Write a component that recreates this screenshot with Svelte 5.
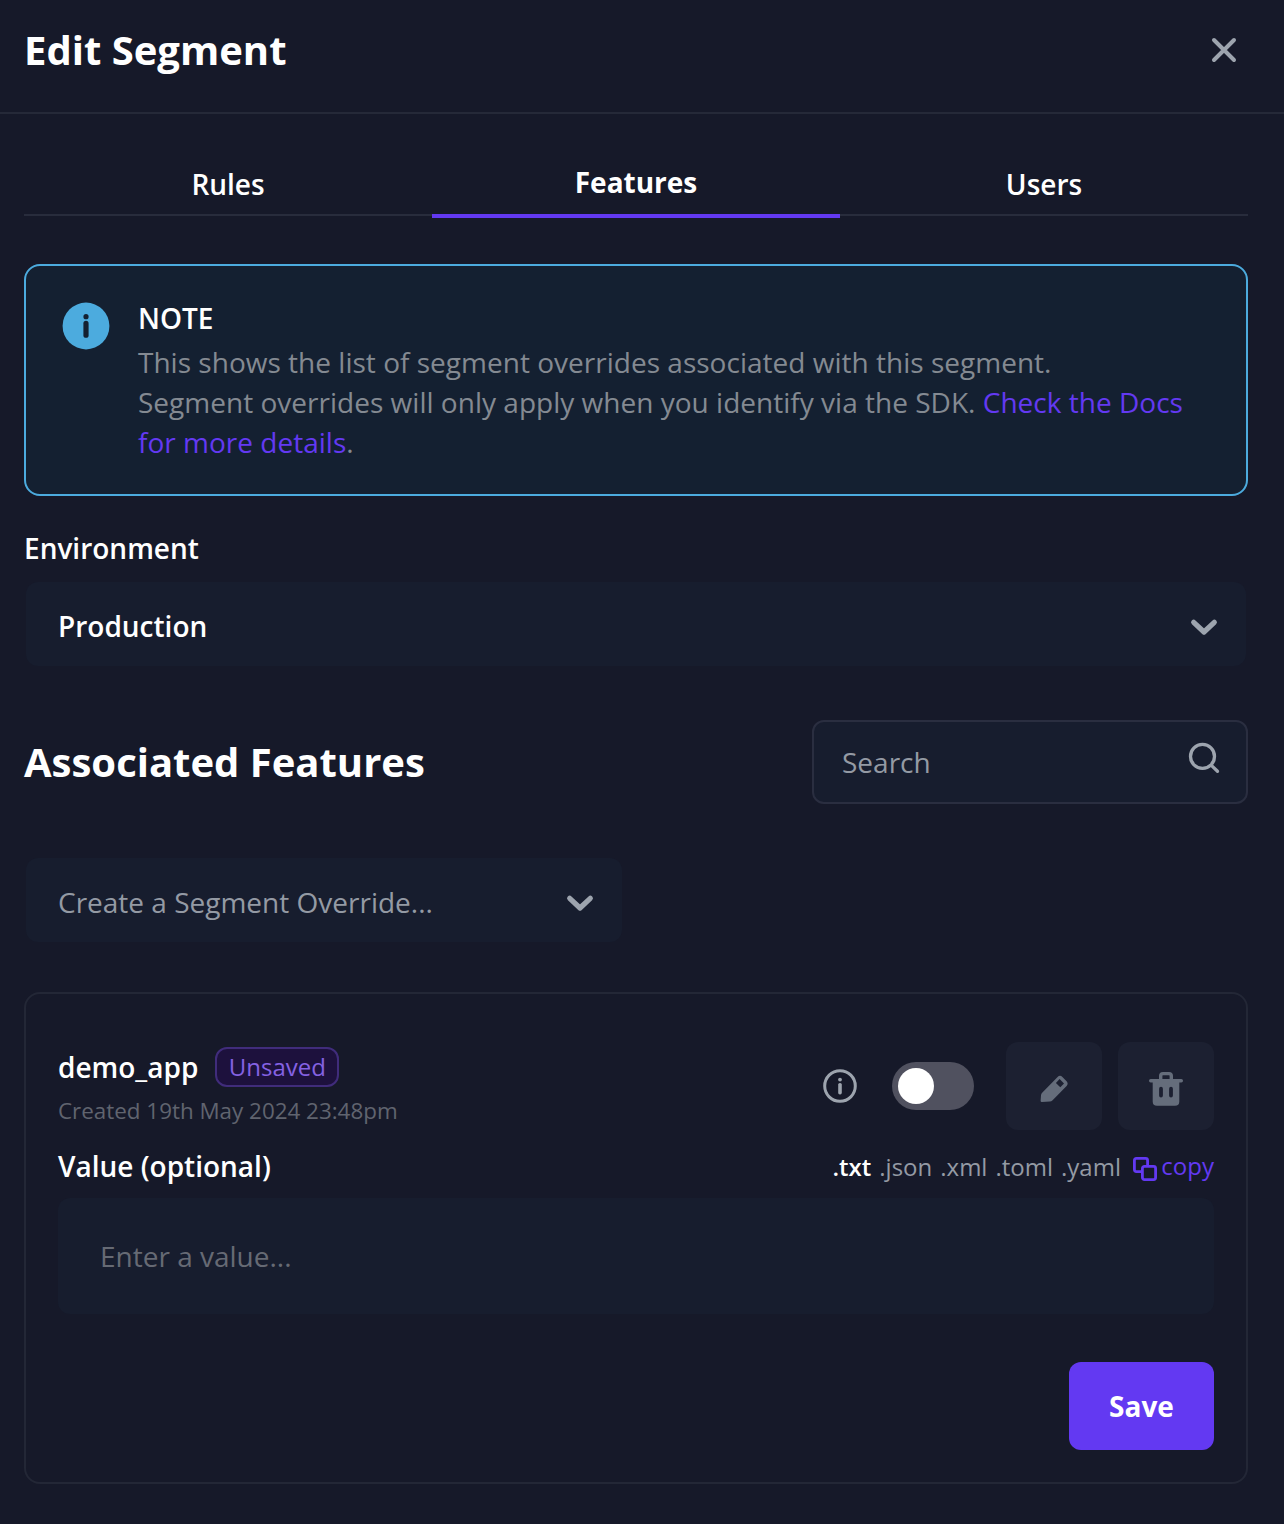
<script>
  const tabs = ['Rules', 'Features', 'Users'];
  let active = $state('Features');

  const formats = ['.txt', '.json', '.xml', '.toml', '.yaml'];
  let format = $state('.txt');

  let enabled = $state(false);
</script>

{#snippet chevron()}
  <svg class="chevron" width="28" height="20" viewBox="0 0 28 20" aria-hidden="true">
    <path d="M3.7 6.3 L14 16 L24.3 6.3" />
  </svg>
{/snippet}

<div class="modal">
  <header class="modal-header">
    <h1>Edit Segment</h1>
    <button class="close" aria-label="Close">
      <svg width="28" height="28" viewBox="0 0 28 28"><path d="M4 4 L24 24 M24 4 L4 24" /></svg>
    </button>
  </header>

  <main>
    <nav class="tabs">
      {#each tabs as tab}
        <button class="tab" class:active={tab === active} onclick={() => (active = tab)}>{tab}</button>
      {/each}
    </nav>

    <section class="note">
      <svg class="note-icon" width="48" height="48" viewBox="0 0 48 48" aria-hidden="true">
        <circle class="disc" cx="24" cy="24" r="23.4" />
        <circle class="mark" cx="24" cy="14.7" r="2.6" />
        <rect class="mark" x="21.4" y="18.8" width="5.2" height="17" rx="2.6" />
      </svg>
      <div class="note-body">
        <h2>NOTE</h2>
        <p>
          This shows the list of segment overrides associated with this segment.<br />
          Segment overrides will only apply when you identify via the SDK.
          <span class="link">Check the Docs<br />for more details</span>.
        </p>
      </div>
    </section>

    <div class="label">Environment</div>
    <div class="select environment">
      <span>Production</span>
      {@render chevron()}
    </div>

    <div class="features-head">
      <h1>Associated Features</h1>
      <div class="search">
        <span>Search</span>
        <svg width="36" height="36" viewBox="0 0 36 36" aria-hidden="true">
          <circle cx="16.5" cy="16.4" r="12" />
          <path d="M25.6 25.6 L31.5 31.3" />
        </svg>
      </div>
    </div>

    <div class="select override">
      <span>Create a Segment Override...</span>
      {@render chevron()}
    </div>

    <section class="card">
      <div class="card-top">
        <div class="feature">
          <div class="feature-name">
            <span>demo_app</span>
            <span class="badge">Unsaved</span>
          </div>
          <div class="created">Created 19th May 2024 23:48pm</div>
        </div>
        <div class="actions">
          <svg class="info" width="36" height="36" viewBox="0 0 36 36" aria-hidden="true">
            <circle class="ring" cx="18" cy="18" r="15.3" />
            <circle class="fill" cx="18" cy="11.6" r="1.9" />
            <rect class="fill" x="16.2" y="15" width="3.6" height="11.4" rx="1.6" />
          </svg>
          <button class="switch" class:on={enabled} aria-label="Toggle feature" onclick={() => (enabled = !enabled)}>
            <span class="knob"></span>
          </button>
          <button class="square edit" aria-label="Edit">
            <svg width="40" height="40" viewBox="0 0 40 40">
              <path
                fill-rule="evenodd"
                d="M8.4 23.6 L23.6 7.9 Q26 5.7 28.4 7.9 L32.6 12.2 Q34.7 14.6 32.6 17 L18.6 31.2 Q17.4 32.4 15.8 32.6 L7.9 33.1 Q6.5 33.1 6.6 31.7 L7 26.3 Q7.1 24.8 8.4 23.6 Z M21.9 13.9 L26.3 18.3 L30 14.5 L25.6 10.1 Z"
              />
            </svg>
          </button>
          <button class="square" aria-label="Delete">
            <svg width="40" height="40" viewBox="0 0 40 40">
              <path class="line" d="M14.7 11 V7.8 Q14.7 5.6 17 5.6 H23 Q25.3 5.6 25.3 7.8 V11" />
              <path class="line" d="M4.7 12.7 H35.3" />
              <path
                fill-rule="evenodd"
                d="M6.7 13 H33.3 V33.4 Q33.3 37.7 29 37.7 H11 Q6.7 37.7 6.7 33.4 Z M15 18.8 a1.9 1.9 0 0 0 -1.9 1.9 V27.5 a1.9 1.9 0 0 0 3.8 0 V20.7 a1.9 1.9 0 0 0 -1.9 -1.9 Z M25 18.8 a1.9 1.9 0 0 0 -1.9 1.9 V27.5 a1.9 1.9 0 0 0 3.8 0 V20.7 a1.9 1.9 0 0 0 -1.9 -1.9 Z"
              />
            </svg>
          </button>
        </div>
      </div>

      <div class="value-head">
        <div class="value-label">Value (optional)</div>
        <div class="formats">
          {#each formats as f}
            <button class="format" class:active={f === format} onclick={() => (format = f)}>{f}</button>
          {/each}
          <button class="copy">
            <svg width="24" height="24" viewBox="0 0 24 24" aria-hidden="true">
              <path d="M8 14.6 H3.4 Q1.4 14.6 1.4 12.6 V3.4 Q1.4 1.4 3.4 1.4 H12.6 Q14.6 1.4 14.6 3.4 V8" />
              <rect x="9.4" y="9.4" width="13.2" height="13.2" rx="2" />
            </svg>
            <span>copy</span>
          </button>
        </div>
      </div>

      <div class="value-input">Enter a value...</div>

      <div class="footer">
        <button class="save">Save</button>
      </div>
    </section>
  </main>
</div>

<style>
  :global(body) {
    background: #161929;
  }

  .modal {
    min-height: 1524px;
    box-sizing: border-box;
    background: #161929;
    color: #fff;
    font-family: 'Open Sans', 'Noto Sans', sans-serif;
    font-size: 28px;
    line-height: 40px;
  }

  .modal * {
    box-sizing: border-box;
  }

  h1,
  h2,
  p {
    margin: 0;
  }

  h1 {
    font-size: 40px;
    line-height: 56px;
    font-weight: 700;
  }

  button {
    margin: 0;
    padding: 0;
    border: 0;
    background: none;
    color: inherit;
    font: inherit;
    cursor: pointer;
  }

  svg {
    display: block;
    flex: none;
  }

  .modal-header {
    height: 114px;
    padding: 0 46px 12px 24px;
    border-bottom: 2px solid #252938;
    display: flex;
    align-items: center;
    justify-content: space-between;
  }

  .close path {
    stroke: #9da4ae;
    stroke-width: 4;
    stroke-linecap: round;
    fill: none;
  }

  main {
    padding: 40px 36px 0 24px;
  }

  .tabs {
    display: grid;
    grid-template-columns: repeat(3, 1fr);
    height: 64px;
  }

  .tab {
    height: 62px;
    border-bottom: 2px solid #282c3c;
    font-weight: 600;
  }

  .tab.active {
    height: 64px;
    border-bottom: 4px solid #6339f2;
    font-weight: 700;
    padding-bottom: 4px;
  }

  .note {
    display: flex;
    height: 232px;
    margin-top: 46px;
    padding: 32px 36px;
    border: 2px solid #4cabde;
    border-radius: 16px;
    background: #142031;
  }

  .note-icon {
    margin: 4px 28px 0 0;
  }

  .disc {
    fill: #4cabde;
  }

  .mark {
    fill: #142031;
  }

  .note h2 {
    font-size: 28px;
    line-height: 40px;
    font-weight: 600;
    margin: 0 0 4px;
  }

  .note p {
    color: #848a92;
    letter-spacing: 0.015px;
    white-space: nowrap;
  }

  .link {
    color: #6339f2;
  }

  .label {
    margin-top: 32px;
    font-weight: 600;
  }

  .select {
    display: flex;
    align-items: center;
    justify-content: space-between;
    height: 84px;
    border-radius: 12px;
    background: #171d2e;
    padding: 4px 28px 0 32px;
  }

  .environment {
    margin: 14px 2px 0;
    font-weight: 600;
  }

  .chevron path {
    fill: none;
    stroke: #9da4ae;
    stroke-width: 5.2;
    stroke-linecap: round;
    stroke-linejoin: round;
  }

  .features-head {
    display: flex;
    align-items: center;
    justify-content: space-between;
    margin-top: 54px;
  }

  .search {
    display: flex;
    justify-content: space-between;
    width: 436px;
    height: 84px;
    padding: 20px 24px 0 28px;
    border: 2px solid #2a2e40;
    border-radius: 12px;
    background: #171d2e;
    color: #949aa4;
  }

  .search svg {
    margin-top: -2px;
    fill: none;
    stroke: #9da4ae;
    stroke-width: 3.3;
    stroke-linecap: round;
  }

  .override {
    width: 596px;
    margin: 54px 0 0 2px;
    color: #949aa4;
  }

  .card {
    height: 492px;
    margin-top: 50px;
    padding: 48px 32px 0;
    border: 2px solid #232736;
    border-radius: 16px;
  }

  .card-top {
    display: flex;
    justify-content: space-between;
    height: 88px;
  }

  .feature {
    padding-top: 5px;
  }

  .feature-name {
    display: flex;
    align-items: center;
    gap: 17px;
    font-weight: 600;
  }

  .badge {
    height: 40px;
    padding: 0 11.4px;
    border: 2px solid #402c7b;
    border-radius: 12px;
    background: #1d113d;
    color: #8562e3;
    font-size: 24px;
    line-height: 36px;
    font-weight: 400;
  }

  .created {
    margin-top: 8px;
    font-size: 22.4px;
    line-height: 32px;
    color: #60646f;
  }

  .actions {
    display: flex;
    align-items: center;
  }

  .ring {
    fill: none;
    stroke: #9da4ae;
    stroke-width: 3;
  }

  .info .fill {
    fill: #9da4ae;
  }

  .switch {
    display: flex;
    width: 82px;
    height: 48px;
    margin: 0 32px 0 34px;
    padding: 6px;
    border-radius: 24px;
    background: #50515f;
  }

  .switch.on {
    justify-content: flex-end;
    background: #6339f2;
  }

  .knob {
    width: 36px;
    height: 36px;
    border-radius: 50%;
    background: #fff;
  }

  .square {
    display: grid;
    place-items: center;
    width: 96px;
    height: 88px;
    padding-top: 4px;
    border-radius: 12px;
    background: #1c2031;
  }

  .square svg {
    fill: #656d7b;
  }

  .edit {
    margin-right: 16px;
    padding-top: 6px;
  }

  .line {
    fill: none;
    stroke: #656d7b;
    stroke-width: 3.4;
    stroke-linecap: round;
  }

  .value-head {
    display: flex;
    justify-content: space-between;
    margin-top: 17px;
    height: 40px;
    font-weight: 600;
  }

  .value-label {
    margin-top: -1px;
  }

  .formats {
    display: flex;
    gap: 8px;
    font-size: 24px;
    font-weight: 400;
    color: #949aa4;
  }

  .format.active {
    color: #fff;
    font-weight: 600;
  }

  .copy {
    display: flex;
    align-items: center;
    gap: 4px;
    margin-left: 4.4px;
    color: #6339f2;
  }

  .copy span {
    margin-top: -2px;
  }

  .copy svg {
    margin-top: 3px;
    fill: none;
    stroke: #6339f2;
    stroke-width: 2.8;
  }

  .value-input {
    height: 116px;
    margin-top: 11px;
    padding: 38px 42px;
    border-radius: 12px;
    background: #171d2e;
    color: #666a74;
  }

  .footer {
    display: flex;
    justify-content: flex-end;
    margin-top: 48px;
  }

  .save {
    width: 145px;
    height: 88px;
    border-radius: 12px;
    background: #6339f2;
    font-weight: 700;
  }
</style>
